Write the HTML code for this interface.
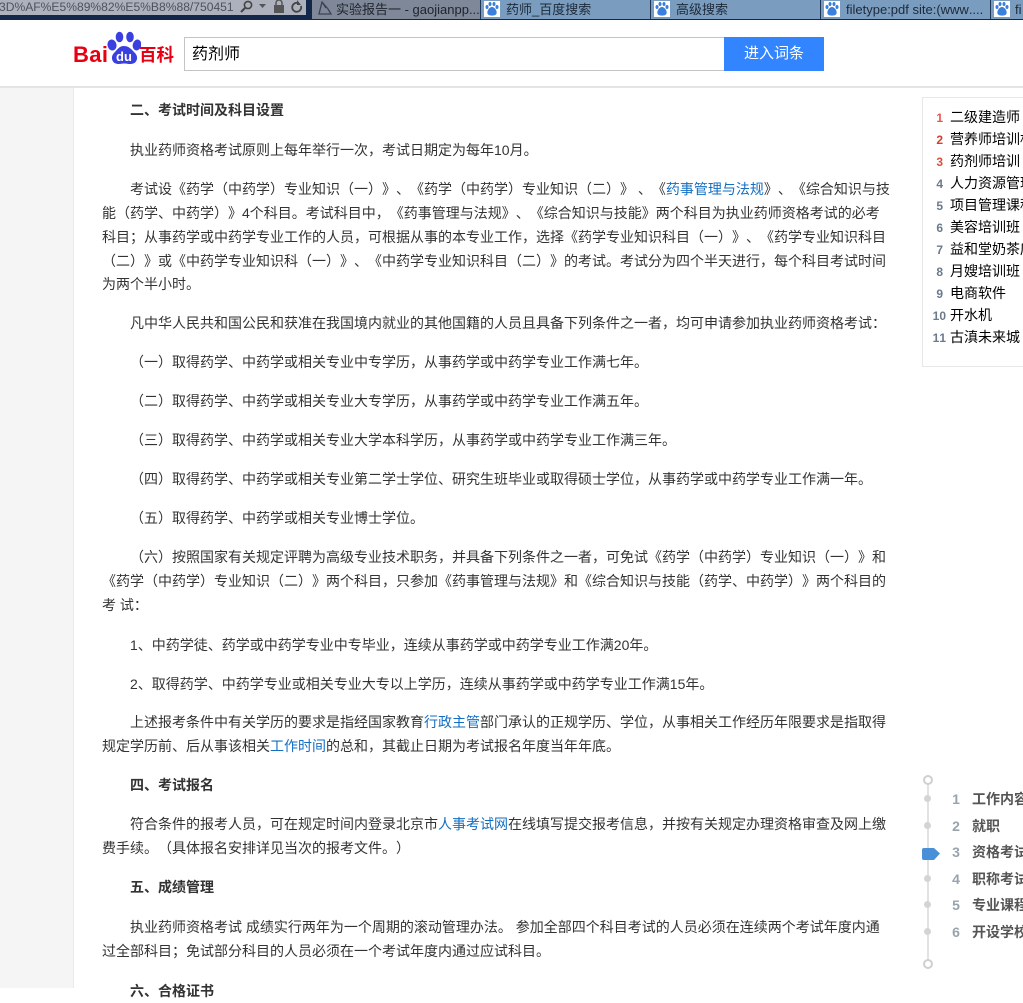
<!DOCTYPE html>
<html lang="zh"><head><meta charset="utf-8"><title>药剂师</title>
<style>
html,body{margin:0;padding:0;background:#fff}
body{width:1023px;height:988px;overflow:hidden;position:relative;font-family:"Liberation Sans","WenQuanYi Zen Hei","Noto Sans CJK SC",sans-serif;color:#333;text-spacing-trim:space-all;text-autospace:no-autospace;font-kerning:none}
div,span.a{position:absolute}
.l{left:102px;font-size:14px;line-height:24px;height:24px;white-space:nowrap;color:#333}
.i{left:130px}
.b{font-weight:bold;left:130px;color:#333}
a{color:#136ec2;text-decoration:none}
.tab{top:0;height:19px;background:#7a9cbe;font-size:13px;line-height:19px;color:#1d2a3a;white-space:nowrap;overflow:hidden;border-right:1px solid #1c3556}
.tabi{position:absolute;left:3px;top:1px;width:16px;height:16px;background:#fff}
.r{left:950px;font-size:14px;line-height:22px;height:22px;color:#000;white-space:nowrap}
.n{width:20px;left:923px;text-align:right;font-size:12px;font-weight:bold;line-height:22px;height:22px;color:#6b7a8c}
.s{left:972px;font-size:14px;line-height:26px;height:26px;font-weight:bold;color:#555;white-space:nowrap}
.sn{left:948px;width:16px;text-align:center;font-size:14px;line-height:26px;height:26px;font-weight:bold;color:#9aa3ad}
.dot{left:924px;width:7px;height:7px;border-radius:50%;background:#d4d4d4}
</style></head><body>

<!-- browser chrome -->
<div style="left:0;top:0;width:1023px;height:20px;background:#13274a"></div>
<div style="left:0;top:0;width:306px;height:15px;background:#adb1bd;font-size:12.100px;line-height:14px;color:#4d515c;white-space:nowrap;overflow:hidden"><span style="margin-left:-1px">3D%AF%E5%89%82%E5%B8%88/750451</span></div>
<svg style="position:absolute;left:238px;top:0" width="68" height="15" viewBox="0 0 68 15">
<circle cx="10" cy="5" r="3.600" fill="none" stroke="#444" stroke-width="1.600"/><path d="M7 8 L3 12" stroke="#444" stroke-width="2"/>
<path d="M21 4h7l-3.500 4z" fill="#555"/>
<rect x="36" y="5" width="10" height="8" fill="#555"/><path d="M38 5V3a3 3 0 0 1 6 0v2" fill="none" stroke="#555" stroke-width="1.500"/>
<path d="M60 3a4.500 4.500 0 1 0 3 3" fill="none" stroke="#444" stroke-width="1.800"/><path d="M59 0v5h4z" fill="#444"/>
</svg>
<div class="tab" style="left:312px;width:168px;background:#7f8899;color:#20242c"><svg style="position:absolute;left:5px;top:1px" width="17" height="16"><path d="M5 1 L2 13 H14 L11 8 Z M5 1 L9 7" fill="none" stroke="#3c4250" stroke-width="1.300"/></svg><span style="margin-left:24px">实验报告一 - gaojianpp...</span></div>

<div class="tab" style="left:481px;width:169px"><span class="tabi"><svg width="16" height="16" viewBox="0 0 16 16"><g fill="#3b7fdc"><ellipse cx="3" cy="6" rx="1.500" ry="2"/><ellipse cx="6" cy="3" rx="1.500" ry="2"/><ellipse cx="10" cy="3" rx="1.500" ry="2"/><ellipse cx="13" cy="6" rx="1.500" ry="2"/><path d="M8 6C5 6 2 11 4 13.500C6 15 10 15 12 13.500C14 11 11 6 8 6Z"/></g></svg></span><span style="margin-left:25px">药师_百度搜索</span></div>
<div class="tab" style="left:651px;width:169px"><span class="tabi"><svg width="16" height="16" viewBox="0 0 16 16"><g fill="#3b7fdc"><ellipse cx="3" cy="6" rx="1.500" ry="2"/><ellipse cx="6" cy="3" rx="1.500" ry="2"/><ellipse cx="10" cy="3" rx="1.500" ry="2"/><ellipse cx="13" cy="6" rx="1.500" ry="2"/><path d="M8 6C5 6 2 11 4 13.500C6 15 10 15 12 13.500C14 11 11 6 8 6Z"/></g></svg></span><span style="margin-left:25px">高级搜索</span></div>
<div class="tab" style="left:821px;width:169px"><span class="tabi"><svg width="16" height="16" viewBox="0 0 16 16"><g fill="#3b7fdc"><ellipse cx="3" cy="6" rx="1.500" ry="2"/><ellipse cx="6" cy="3" rx="1.500" ry="2"/><ellipse cx="10" cy="3" rx="1.500" ry="2"/><ellipse cx="13" cy="6" rx="1.500" ry="2"/><path d="M8 6C5 6 2 11 4 13.500C6 15 10 15 12 13.500C14 11 11 6 8 6Z"/></g></svg></span><span style="margin-left:25px">filetype:pdf site:(www....</span></div>
<div class="tab" style="left:991px;width:32px;border:0"><span class="tabi"><svg width="16" height="16" viewBox="0 0 16 16"><g fill="#3b7fdc"><ellipse cx="3" cy="6" rx="1.500" ry="2"/><ellipse cx="6" cy="3" rx="1.500" ry="2"/><ellipse cx="10" cy="3" rx="1.500" ry="2"/><ellipse cx="13" cy="6" rx="1.500" ry="2"/><path d="M8 6C5 6 2 11 4 13.500C6 15 10 15 12 13.500C14 11 11 6 8 6Z"/></g></svg></span><span style="margin-left:24px">fi</span></div>

<!-- page columns -->
<div style="left:0;top:88px;width:73px;height:900px;background:#f5f5f5;border-right:1px solid #ebebeb"></div>

<!-- header -->
<div style="left:0;top:21px;width:1023px;height:65px;background:#fff;border-bottom:2px solid #e4e4e4"></div>
<div style="left:73px;top:41px;font:bold 22px/28px 'Liberation Sans',sans-serif;color:#e60012;letter-spacing:.4px">Bai</div>
<svg style="position:absolute;left:107px;top:31px" width="34" height="35" viewBox="0 0 34 35">
<g fill="#3a3fe0"><ellipse cx="5" cy="14" rx="4.500" ry="5.500" transform="rotate(-12 5 14)"/><ellipse cx="12.500" cy="6" rx="3.800" ry="5.300"/><ellipse cx="23" cy="6" rx="3.800" ry="5.300"/><ellipse cx="30" cy="14" rx="4.300" ry="5.500" transform="rotate(12 30 14)"/>
<path d="M17 15C12 15 10 19 7 22C3 26 5 33 11 33C14 33 15 32.500 17 32.500C20 32.500 21 33 24 33C30 33 32 26 28 22C25 19 22 15 17 15Z"/></g>
<text x="17" y="30" text-anchor="middle" font-family="Liberation Sans" font-weight="bold" font-size="13" fill="#fff">du</text></svg>
<div style="left:139px;top:44px;font:bold 17.500px/22px 'WenQuanYi Zen Hei','Noto Sans CJK SC',sans-serif;color:#e60012;white-space:nowrap">百科</div>

<div style="left:184px;top:37px;width:540px;height:32px;border:1px solid #c4c4c4;border-right:0;background:#fff"></div>
<div style="left:192px;top:43px;font-size:16px;line-height:24px;color:#000">药剂师</div>
<div style="left:724px;top:37px;width:100px;height:34px;background:#3385ff;color:#fff;font-size:15px;line-height:33px;text-align:center">进入词条</div>

<!-- article -->
<div class="l b" style="top:98px">二、考试时间及科目设置</div>
<div class="l i" style="top:138px">执业药师资格考试原则上每年举行一次，考试日期定为每年10月。</div>
<div class="l i" style="top:177px">考试设《药学（中药学）专业知识（一）》、《药学（中药学）专业知识（二）》 、《<a href="#">药事管理与法规</a>》、《综合知识与技</div>
<div class="l" style="top:201px">能（药学、中药学）》4个科目。考试科目中，《药事管理与法规》、《综合知识与技能》两个科目为执业药师资格考试的必考</div>
<div class="l" style="top:225px">科目；从事药学或中药学专业工作的人员，可根据从事的本专业工作，选择《药学专业知识科目（一）》、《药学专业知识科目</div>
<div class="l" style="top:249px">（二）》或《中药学专业知识科（一）》、《中药学专业知识科目（二）》的考试。考试分为四个半天进行，每个科目考试时间</div>
<div class="l" style="top:272px">为两个半小时。</div>
<div class="l i" style="top:311px">凡中华人民共和国公民和获准在我国境内就业的其他国籍的人员且具备下列条件之一者，均可申请参加执业药师资格考试：</div>
<div class="l i" style="top:350px">（一）取得药学、中药学或相关专业中专学历，从事药学或中药学专业工作满七年。</div>
<div class="l i" style="top:389px">（二）取得药学、中药学或相关专业大专学历，从事药学或中药学专业工作满五年。</div>
<div class="l i" style="top:428px">（三）取得药学、中药学或相关专业大学本科学历，从事药学或中药学专业工作满三年。</div>
<div class="l i" style="top:467px">（四）取得药学、中药学或相关专业第二学士学位、研究生班毕业或取得硕士学位，从事药学或中药学专业工作满一年。</div>
<div class="l i" style="top:506px">（五）取得药学、中药学或相关专业博士学位。</div>
<div class="l i" style="top:545px">（六）按照国家有关规定评聘为高级专业技术职务，并具备下列条件之一者，可免试《药学（中药学）专业知识（一）》和</div>
<div class="l" style="top:569px">《药学（中药学）专业知识（二）》两个科目，只参加《药事管理与法规》和《综合知识与技能（药学、中药学）》两个科目的</div>
<div class="l" style="top:593px">考 试：</div>
<div class="l i" style="top:633px">1、中药学徒、药学或中药学专业中专毕业，连续从事药学或中药学专业工作满20年。</div>
<div class="l i" style="top:672px">2、取得药学、中药学专业或相关专业大专以上学历，连续从事药学或中药学专业工作满15年。</div>
<div class="l i" style="top:710px">上述报考条件中有关学历的要求是指经国家教育<a href="#">行政主管</a>部门承认的正规学历、学位，从事相关工作经历年限要求是指取得</div>
<div class="l" style="top:734px">规定学历前、后从事该相关<a href="#">工作时间</a>的总和，其截止日期为考试报名年度当年年底。</div>
<div class="l b" style="top:773px">四、考试报名</div>
<div class="l i" style="top:812px">符合条件的报考人员，可在规定时间内登录北京市<a href="#">人事考试网</a>在线填写提交报考信息，并按有关规定办理资格审查及网上缴</div>
<div class="l" style="top:836px">费手续。（具体报名安排详见当次的报考文件。）</div>
<div class="l b" style="top:875px">五、成绩管理</div>
<div class="l i" style="top:915px">执业药师资格考试 成绩实行两年为一个周期的滚动管理办法。 参加全部四个科目考试的人员必须在连续两个考试年度内通</div>
<div class="l" style="top:939px">过全部科目；免试部分科目的人员必须在一个考试年度内通过应试科目。</div>
<div class="l b" style="top:979px">六、合格证书</div>

<!-- hot list -->
<div style="left:922px;top:97px;width:110px;height:268px;border:1px solid #e8e8e8;background:#fff;overflow:hidden"></div>
<div class="n" style="top:107px;color:#e4574c">1</div><div class="r" style="top:106px">二级建造师</div>
<div class="n" style="top:129px;color:#d0402f">2</div><div class="r" style="top:128px">营养师培训机</div>
<div class="n" style="top:151px;color:#d9503f">3</div><div class="r" style="top:150px">药剂师培训</div>
<div class="n" style="top:173px">4</div><div class="r" style="top:172px">人力资源管理</div>
<div class="n" style="top:195px">5</div><div class="r" style="top:194px">项目管理课程</div>
<div class="n" style="top:217px">6</div><div class="r" style="top:216px">美容培训班</div>
<div class="n" style="top:239px">7</div><div class="r" style="top:238px">益和堂奶茶店</div>
<div class="n" style="top:261px">8</div><div class="r" style="top:260px">月嫂培训班</div>
<div class="n" style="top:283px">9</div><div class="r" style="top:282px">电商软件</div>
<div class="n" style="top:305px;width:23px">10</div><div class="r" style="top:304px">开水机</div>
<div class="n" style="top:327px;width:23px">11</div><div class="r" style="top:326px">古滇未来城</div>

<!-- side nav -->
<div style="left:927px;top:785px;width:2px;height:175px;background:#e2e2e2"></div>
<div style="left:923px;top:775px;width:6px;height:6px;border:2px solid #d0d0d0;border-radius:50%;background:#fff"></div>
<div style="left:923px;top:959px;width:6px;height:6px;border:2px solid #d0d0d0;border-radius:50%;background:#fff"></div>
<div class="dot" style="top:795px"></div><div class="dot" style="top:822px"></div>
<div class="dot" style="top:875px"></div><div class="dot" style="top:901px"></div><div class="dot" style="top:928px"></div>
<svg style="position:absolute;left:922px;top:847px" width="19" height="14"><path d="M2 1H12L18 6.500L12 13H2Q0 13 0 11V3Q0 1 2 1Z" fill="#4a90d9"/></svg>
<div class="sn" style="top:786px">1</div><div class="s" style="top:786px">工作内容</div>
<div class="sn" style="top:813px">2</div><div class="s" style="top:813px">就职</div>
<div class="sn" style="top:839px">3</div><div class="s" style="top:839px">资格考试</div>
<div class="sn" style="top:866px">4</div><div class="s" style="top:866px">职称考试</div>
<div class="sn" style="top:892px">5</div><div class="s" style="top:892px">专业课程</div>
<div class="sn" style="top:919px">6</div><div class="s" style="top:919px">开设学校</div>
</body></html>
